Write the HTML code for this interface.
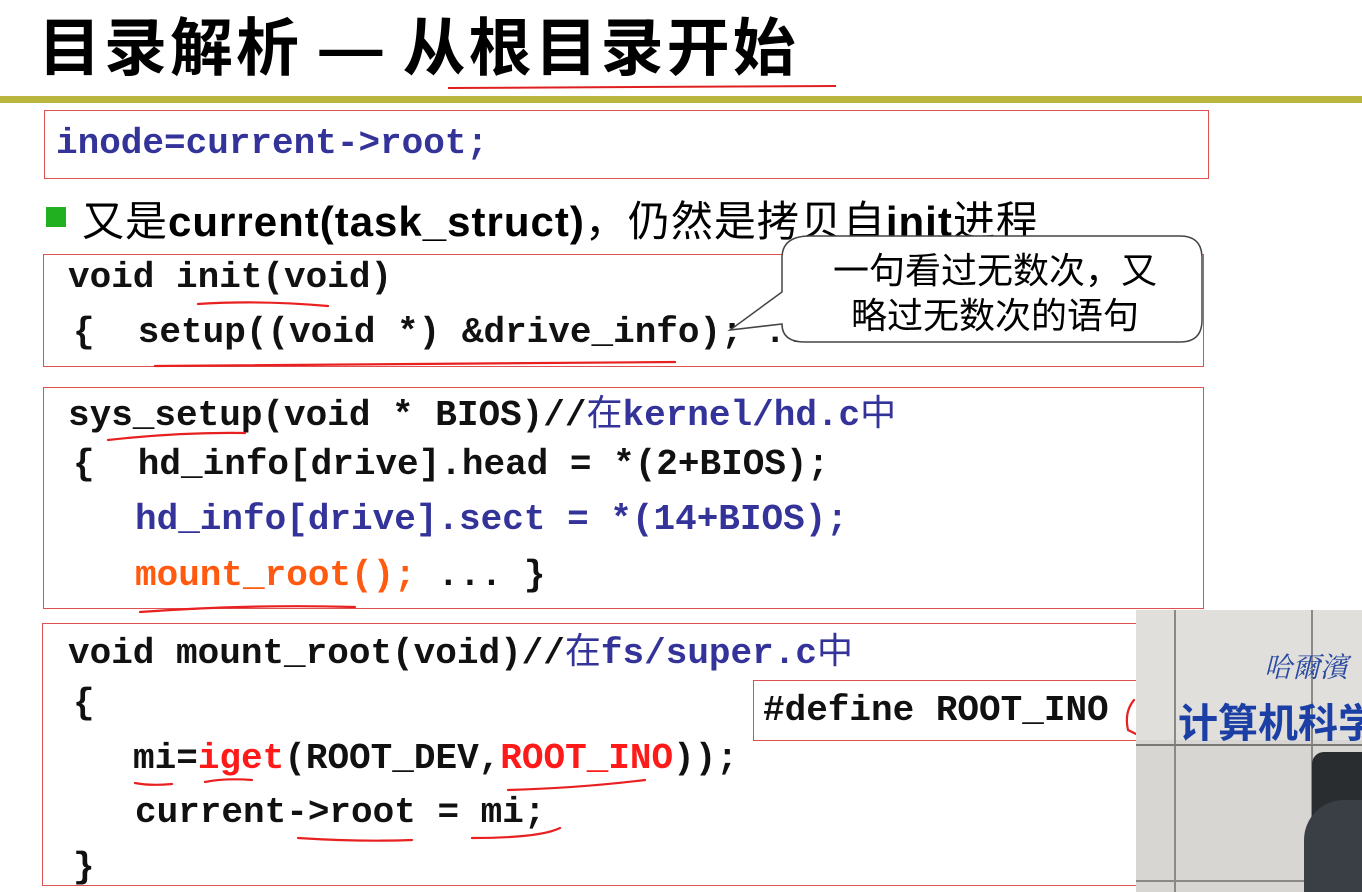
<!DOCTYPE html>
<html><head><meta charset="utf-8"><style>
body{margin:0;width:1362px;height:892px;background:#fff;position:relative;overflow:hidden;font-family:"Liberation Sans","Noto Sans CJK SC",sans-serif}
.a{position:absolute}
.box{position:absolute;border:1.5px solid #e05050;box-sizing:border-box}
.c{position:absolute;font-family:"Liberation Mono","Noto Sans CJK SC",monospace;font-size:36px;font-weight:bold;white-space:pre;line-height:40px;color:#111}
.b{color:#333399}.o{color:#ff5a10}.r{color:#ff1a1a}
.cj{font-family:"Noto Sans CJK SC",sans-serif;font-weight:normal}
</style></head><body>
<div class="a" style="left:38px;top:4px;font-size:63px;line-height:80px;color:#000;font-family:'Noto Sans CJK SC',sans-serif;font-weight:bold;white-space:nowrap;letter-spacing:3px">目录解析 <span style="font-family:'Liberation Sans'">—</span> 从根目录开始</div>
<div class="a" style="left:448px;top:86px;width:388px;height:2px;background:#e02020;transform:rotate(-0.3deg)"></div>
<div class="a" style="left:0;top:96px;width:1362px;height:7px;background:#b8b63c"></div>

<div class="box" style="left:44px;top:110px;width:1165px;height:69px"></div>
<div class="c b" style="left:56px;top:124px">inode=current-&gt;root;</div>

<div class="a" style="left:46px;top:207px;width:20px;height:20px;background:#20b020"></div>
<div class="a" style="left:82px;top:193px;font-size:42px;line-height:52px;color:#000;white-space:nowrap;letter-spacing:1px"><span class="cj">又是</span><b>current(task_struct)</b><span class="cj">，仍然是拷贝自</span><b>init</b><span class="cj">进程</span></div>

<div class="box" style="left:43px;top:254px;width:1161px;height:113px"></div>
<div class="c" style="left:68px;top:258px">void init(void)</div>
<div class="c" style="left:73px;top:313px">{  setup((void *) &amp;drive_info); ...</div>

<svg class="a" style="left:720px;top:232px" width="490" height="120">
<path d="M90 4 H460 Q482 4 482 26 V88 Q482 110 460 110 H85 Q62 110 62 92 L10 98 L62 60 V26 Q62 4 90 4 Z" fill="#fff" stroke="#444" stroke-width="1.5"/>
</svg>
<div class="a" style="left:810px;top:246px;width:370px;font-size:36px;line-height:45px;color:#000;font-family:'Noto Sans CJK SC',sans-serif;text-align:center">一句看过无数次，又<br>略过无数次的语句</div>

<div class="box" style="left:43px;top:387px;width:1161px;height:222px"></div>
<div class="c" style="left:68px;top:390px">sys_setup(void * BIOS)//<span class="b"><span class="cj">在</span>kernel/hd.c<span class="cj">中</span></span></div>
<div class="c" style="left:73px;top:445px">{  hd_info[drive].head = *(2+BIOS);</div>
<div class="c b" style="left:135px;top:500px">hd_info[drive].sect = *(14+BIOS);</div>
<div class="c" style="left:135px;top:556px"><span class="o">mount_root();</span> ... }</div>

<div class="box" style="left:42px;top:623px;width:1100px;height:263px"></div>
<div class="c" style="left:68px;top:628px">void mount_root(void)//<span class="b"><span class="cj">在</span>fs/super.c<span class="cj">中</span></span></div>
<div class="c" style="left:73px;top:684px">{</div>
<div class="c" style="left:133px;top:739px">mi=<span class="r">iget</span>(ROOT_DEV,<span class="r">ROOT_INO</span>));</div>
<div class="c" style="left:135px;top:793px">current-&gt;root = mi;</div>
<div class="c" style="left:73px;top:848px">}</div>

<div class="box" style="left:753px;top:680px;width:390px;height:61px"></div>
<div class="c" style="left:763px;top:691px">#define ROOT_INO</div>

<svg class="a" style="left:0;top:0" width="1362" height="892" fill="none" stroke="#e82020" stroke-width="2.2" stroke-linecap="round">
<path d="M198 304 Q260 300 328 306"/>
<path d="M155 366 Q400 364 675 362"/>
<path d="M108 440 Q180 432 245 433"/>
<path d="M140 612 Q250 604 355 607"/>
<path d="M135 783 Q150 786 172 784"/>
<path d="M205 782 Q225 778 252 780"/>
<path d="M508 790 Q580 788 645 780"/>
<path d="M298 838 Q360 842 412 840"/>
<path d="M472 838 Q540 838 560 828"/>
<path d="M1134 700 Q1124 712 1128 730 L1136 734"/>
</svg>

<div class="a" style="left:1136px;top:610px;width:226px;height:282px;background:#d8d6d2;overflow:hidden">
<div class="a" style="left:0;top:0;width:226px;height:130px;background:#e0dfdc"></div>
<div class="a" style="left:38px;top:0;width:2px;height:282px;background:#8a8985"></div>
<div class="a" style="left:175px;top:0;width:2px;height:282px;background:#8a8985"></div>
<div class="a" style="left:0;top:134px;width:226px;height:2px;background:#7a7975"></div>
<div class="a" style="left:0;top:270px;width:226px;height:2px;background:#8a8985"></div>
<div class="a" style="left:128px;top:36px;font-size:28px;color:#2a4aa0;font-family:'Noto Serif CJK SC',serif;font-style:italic">哈爾濱</div>
<div class="a" style="left:42px;top:88px;font-size:40px;line-height:44px;font-weight:bold;color:#1b3fa5;font-family:'Noto Sans CJK SC',sans-serif;white-space:nowrap">计算机科学</div>
<div class="a" style="left:176px;top:142px;width:60px;height:150px;background:#2a2d30;border-radius:12px 0 0 0"></div>
<div class="a" style="left:168px;top:190px;width:80px;height:110px;background:#3a3f46;border-radius:40px 0 0 0"></div>
</div>
</body></html>
